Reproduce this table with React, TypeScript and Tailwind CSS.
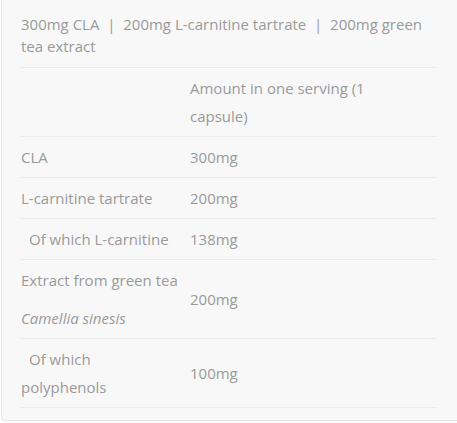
import React from "react";

const rows = [
  { name: "CLA", amount: "300mg" },
  { name: "L-carnitine tartrate", amount: "200mg" },
  { name: "Of which L-carnitine", amount: "138mg", indent: true },
];

export default function App() {
  return (
    <div className="w-[457px] h-[423px] bg-white overflow-hidden font-['Open_Sans',sans-serif] text-[15px] text-[#9a9a9a]">
      <div className="ml-[1px] w-[460px] h-[421px] bg-[#f8f8f8] border-l border-b border-r border-[#e6e6e6] rounded-b-[4px] pl-[19px] pr-[23px] pt-[13px]">
        <p className="leading-[22px] pb-[10px] border-b border-[#ebebeb]">
          300mg CLA &nbsp;|&nbsp; 200mg L-carnitine tartrate &nbsp;|&nbsp; 200mg green tea extract
        </p>

        <table className="w-full border-collapse leading-[28px]">
          <tbody>
            <tr className="border-b border-[#ebebeb]">
              <td className="w-[169px] py-[6px]"></td>
              <td className="py-[6px] pr-[60px]">Amount in one serving (1 capsule)</td>
            </tr>
            {rows.map((r) => (
              <tr key={r.name} className="border-b border-[#ebebeb]">
                <td className={`py-[6px] align-middle ${r.indent ? "pl-2" : ""}`}>{r.name}</td>
                <td className="py-[6px] align-middle">{r.amount}</td>
              </tr>
            ))}
            <tr className="border-b border-[#ebebeb]">
              <td className="py-[6px] align-middle">
                <p className="mb-[10px]">Extract from green tea</p>
                <p className="italic">Camellia sinesis</p>
              </td>
              <td className="py-[6px] align-middle">200mg</td>
            </tr>
            <tr className="border-b border-[#ebebeb]">
              <td className="py-[6px] align-middle">
                <div className="pl-2">Of which</div>
                <div>polyphenols</div>
              </td>
              <td className="py-[6px] align-middle">100mg</td>
            </tr>
          </tbody>
        </table>
      </div>
    </div>
  );
}
